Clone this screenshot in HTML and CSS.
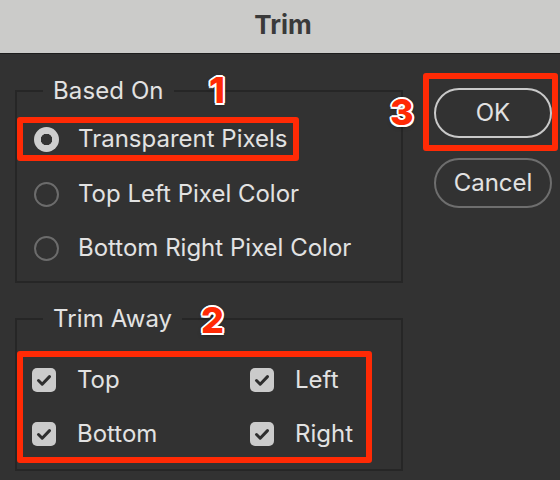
FILE: index.html
```html
<!DOCTYPE html>
<html lang="en">
<head>
<meta charset="utf-8">
<title>Trim</title>
<link rel="stylesheet" href="styles.css">
</head>
<body>
<div class="dialog">
  <div class="titlebar">Trim</div>
  <div class="content">
    <div class="groups">
      <fieldset class="group group-based">
        <legend>Based On</legend>
        <div class="options">
          <div class="mark mark-radio">
            <label class="option"><span class="radio on"></span><span>Transparent Pixels</span></label>
          </div>
          <label class="option"><span class="radio"></span><span>Top Left Pixel Color</span></label>
          <label class="option"><span class="radio"></span><span>Bottom Right Pixel Color</span></label>
        </div>
      </fieldset>
      <fieldset class="group group-trim">
        <legend>Trim Away</legend>
        <div class="mark checks">
          <label class="check"><span class="box"><svg viewBox="0 0 24 24"><path d="M6.5 12.5 L10.2 16.2 L17.5 8.6"/></svg></span><span>Top</span></label>
          <label class="check"><span class="box"><svg viewBox="0 0 24 24"><path d="M6.5 12.5 L10.2 16.2 L17.5 8.6"/></svg></span><span>Left</span></label>
          <label class="check"><span class="box"><svg viewBox="0 0 24 24"><path d="M6.5 12.5 L10.2 16.2 L17.5 8.6"/></svg></span><span>Bottom</span></label>
          <label class="check"><span class="box"><svg viewBox="0 0 24 24"><path d="M6.5 12.5 L10.2 16.2 L17.5 8.6"/></svg></span><span>Right</span></label>
        </div>
      </fieldset>
    </div>
    <div class="buttons">
      <div class="mark mark-ok"><button class="btn btn-ok">OK</button></div>
      <button class="btn btn-cancel">Cancel</button>
    </div>
  </div>
  <span class="num num-1">1</span>
  <span class="num num-2">2</span>
  <span class="num num-3">3</span>
</div>
</body>
</html>
```

FILE: styles.css
```css
* { box-sizing: border-box; }
html, body { margin: 0; padding: 0; }
body {
  width: 560px;
  height: 480px;
  overflow: hidden;
  background: #323232;
  font-family: Inter, "Liberation Sans", Arial, sans-serif;
  color: #e2e2e2;
}
.dialog {
  position: relative;
  width: 560px;
  height: 480px;
  background: #323232;
}
.titlebar {
  height: 54px;
  background: #cbcbc9;
  border-bottom: 1px solid #1d1d1d;
  color: #3a3a3a;
  font-weight: 700;
  font-size: 26px;
  line-height: 26px;
  padding-top: 12px;
  padding-left: 6px;
  text-align: center;
}
.content {
  display: flex;
  padding: 23px 0 0 15px;
}
.groups { width: 388px; }
.group {
  margin: 0;
  padding: 0;
  border: 2px solid #262626;
  min-inline-size: 0;
}
.group legend {
  margin-left: 26px;
  padding: 0 10px;
  font-size: 24px;
  line-height: 28px;
  letter-spacing: 0.1px;
}
.group-trim { margin-top: 22px; padding-bottom: 6px; }

.mark { border: 6px solid #ff2a05; border-radius: 3px; }

.options {
  display: flex;
  flex-direction: column;
  gap: 20px;
  padding: 18px 0 16px;
}
.option {
  display: flex;
  align-items: center;
  gap: 19px;
  height: 34px;
  padding-left: 17px;
  font-size: 24px;
  line-height: 24px;
}
.mark-radio {
  width: 282px;
  margin: -6px 0 -4px;
}
.mark-radio .option { height: 32px; padding-left: 11px; }
.radio {
  width: 25px;
  height: 25px;
  flex: none;
  border-radius: 50%;
  border: 2px solid #6c6c6c;
}
.radio.on {
  border: none;
  background: radial-gradient(circle, #333 0 5.5px, #cecece 6px);
}

.checks {
  width: 355px;
  margin-top: 18px;
  padding: 6px 0 6px 9px;
  display: grid;
  grid-template-columns: 218px auto;
  row-gap: 20px;
}
.check {
  display: flex;
  align-items: center;
  gap: 21px;
  height: 34px;
  font-size: 24px;
  line-height: 24px;
}
.box {
  width: 24px;
  height: 24px;
  flex: none;
  border-radius: 5px;
  background: #cbcbcb;
  display: flex;
}
.box svg { width: 24px; height: 24px; }
.box path {
  fill: none;
  stroke: #2e2e2e;
  stroke-width: 3;
  stroke-linecap: round;
  stroke-linejoin: round;
}

.buttons {
  display: flex;
  flex-direction: column;
  align-items: flex-start;
  margin-left: 31px;
  padding-top: 11px;
  width: 118px;
}
.mark-ok {
  margin: -15px 0 -13px -11px;
  padding: 9px 0 7px 5px;
}
.btn {
  width: 118px;
  height: 50px;
  border-radius: 25px;
  background: transparent;
  color: #e2e2e2;
  font-family: inherit;
  font-size: 24px;
  line-height: 24px;
  padding: 0;
  display: block;
}
.btn-ok { border: 2px solid #c9c9c9; }
.btn-cancel { border: 2px solid #6e6e6e; margin-top: 20px; }

.num {
  position: absolute;
  font-family: Inter, "Liberation Sans", sans-serif;
  font-weight: 800;
  font-size: 36px;
  line-height: 36px;
  color: #ff2a05;
  text-shadow:
    2px 0 0 #fff, -2px 0 0 #fff, 0 2px 0 #fff, 0 -2px 0 #fff,
    1.5px 1.5px 0 #fff, -1.5px 1.5px 0 #fff, 1.5px -1.5px 0 #fff, -1.5px -1.5px 0 #fff,
    0 2px 4px rgba(0,0,0,0.5);
}
.num-1 { left: 209px; top: 72px; }
.num-2 { left: 201px; top: 302px; }
.num-3 { left: 390px; top: 94px; }
```
